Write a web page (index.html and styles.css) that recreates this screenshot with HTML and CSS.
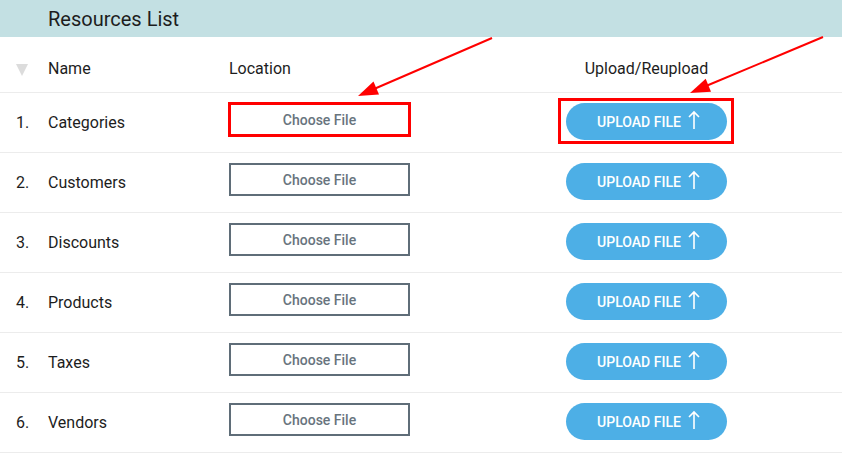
FILE: index.html
```html
<!DOCTYPE html>
<html lang="en">
<head>
  <meta charset="UTF-8" />
  <title>Resources List</title>
  <link rel="stylesheet" href="styles.css">
</head>
<body>

  <div class="page">
    <div class="title-bar">Resources List</div>

    <div class="list">
      <div class="row head">
        <span class="sort"></span>
        <span>Name</span>
        <span>Location</span>
        <span class="upload-head">Upload/Reupload</span>
      </div>

      <div class="row">
        <span>1.</span>
        <span>Categories</span>
        <button class="choose">Choose File</button>
        <button class="upload">UPLOAD FILE
          <svg width="12" height="20" viewBox="0 0 12 20"><path d="M6 19V2M1 7l5-5 5 5" fill="none" stroke="#fff" stroke-width="1.6"/></svg>
        </button>
      </div>
      <div class="row">
        <span>2.</span>
        <span>Customers</span>
        <button class="choose">Choose File</button>
        <button class="upload">UPLOAD FILE
          <svg width="12" height="20" viewBox="0 0 12 20"><path d="M6 19V2M1 7l5-5 5 5" fill="none" stroke="#fff" stroke-width="1.6"/></svg>
        </button>
      </div>
      <div class="row">
        <span>3.</span>
        <span>Discounts</span>
        <button class="choose">Choose File</button>
        <button class="upload">UPLOAD FILE
          <svg width="12" height="20" viewBox="0 0 12 20"><path d="M6 19V2M1 7l5-5 5 5" fill="none" stroke="#fff" stroke-width="1.6"/></svg>
        </button>
      </div>
      <div class="row">
        <span>4.</span>
        <span>Products</span>
        <button class="choose">Choose File</button>
        <button class="upload">UPLOAD FILE
          <svg width="12" height="20" viewBox="0 0 12 20"><path d="M6 19V2M1 7l5-5 5 5" fill="none" stroke="#fff" stroke-width="1.6"/></svg>
        </button>
      </div>
      <div class="row">
        <span>5.</span>
        <span>Taxes</span>
        <button class="choose">Choose File</button>
        <button class="upload">UPLOAD FILE
          <svg width="12" height="20" viewBox="0 0 12 20"><path d="M6 19V2M1 7l5-5 5 5" fill="none" stroke="#fff" stroke-width="1.6"/></svg>
        </button>
      </div>
      <div class="row">
        <span>6.</span>
        <span>Vendors</span>
        <button class="choose">Choose File</button>
        <button class="upload">UPLOAD FILE
          <svg width="12" height="20" viewBox="0 0 12 20"><path d="M6 19V2M1 7l5-5 5 5" fill="none" stroke="#fff" stroke-width="1.6"/></svg>
        </button>
      </div>
    </div>

    <!-- red annotation marks drawn over the screenshot -->
    <svg class="marks" width="842" height="466" viewBox="0 0 842 466">
      <rect x="229.5" y="103.5" width="180" height="32" fill="none" stroke="#f00" stroke-width="3"/>
      <rect x="559.5" y="99.5" width="173" height="43" fill="none" stroke="#f00" stroke-width="3"/>
      <line x1="492" y1="38" x2="374" y2="89" stroke="#f00" stroke-width="2"/>
      <polygon points="358,96 379,94.5 373.5,81.5" fill="#f00"/>
      <line x1="823" y1="37" x2="706" y2="86" stroke="#f00" stroke-width="2"/>
      <polygon points="690,93 711,91.7 705.7,78.7" fill="#f00"/>
    </svg>
  </div>

</body>
</html>
```

FILE: styles.css
```css
body {
  margin: 0;
  background: #fff;
  font-family: Roboto, "Liberation Sans", sans-serif;
  color: #1d1d1d;
}
.page {
  position: relative;
  width: 842px;
  height: 466px;
  overflow: hidden;
}
.title-bar {
  height: 37px;
  background: #c3e0e3;
  display: flex;
  align-items: center;
  padding-left: 48px;
  font-size: 20px;
}
.row {
  display: grid;
  grid-template-columns: 32px 181px 337px 161px;
  align-items: center;
  height: 59px;
  padding-left: 16px;
  border-bottom: 1px solid #ececec;
  font-size: 16px;
}
.row.head {
  height: 47px;
  padding-top: 8px;
}
.sort {
  width: 0;
  height: 0;
  border-left: 6px solid transparent;
  border-right: 6px solid transparent;
  border-top: 12px solid #dcdcdc;
  margin-top: 2px;
}
.upload-head {
  justify-self: center;
  white-space: nowrap;
}
.choose {
  align-self: start;
  margin-top: 10px;
  width: 181px;
  height: 33px;
  background: #fff;
  border: 2px solid #5f6d78;
  font-family: Roboto, "Liberation Sans", sans-serif;
  font-size: 14px;
  font-weight: 500;
  color: #68747d;
  padding: 0;
}
.upload {
  align-self: start;
  margin-top: 10px;
  width: 161px;
  height: 37px;
  border: none;
  border-radius: 19px;
  background: #4dafe6;
  color: #fff;
  font-family: Roboto, "Liberation Sans", sans-serif;
  font-size: 14px;
  font-weight: 500;
  display: flex;
  align-items: center;
  justify-content: center;
  gap: 7px;
  padding: 0 0 0 4px;
}
.upload svg {
  margin-top: -4px;
}
.marks {
  position: absolute;
  left: 0;
  top: 0;
  pointer-events: none;
}
```
